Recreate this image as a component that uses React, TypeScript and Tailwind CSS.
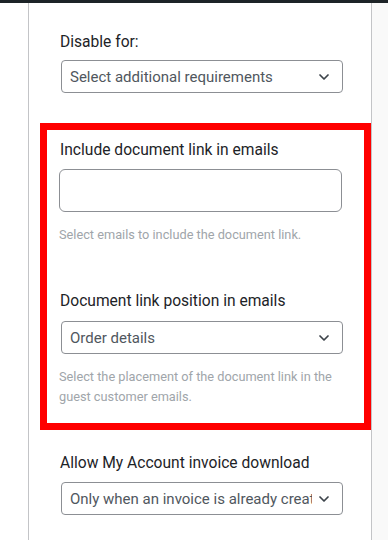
import { ChevronDown } from "lucide-react";

function SelectBox({ value }: { value: string }) {
    return (
        <div className="flex h-[33px] w-[282px] items-center rounded-[4px] border border-[#8c8f94] bg-white pl-[8px] pr-[10px]">
            <span className="flex-1 overflow-hidden whitespace-nowrap text-[15px] leading-[24px] text-[#50575e]">{value}</span>
            <ChevronDown size={16} strokeWidth={2.6} className="ml-[4px] shrink-0 text-[#3c434a]" />
        </div>
    );
}

function Label({ children }: { children: string }) {
    return <div className="text-[15.6px] leading-[24px] text-[#1d2327]">{children}</div>;
}

export default function App() {
    return (
        <div className="h-[540px] w-[388px] overflow-hidden bg-white font-[Roboto,sans-serif]">
            <div className="h-[3px] bg-[#1d2327]" />
            <div className="flex h-[537px]">
                <div className="w-[28px] shrink-0" />
                <div className="w-[344px] shrink-0 border-x border-[#c3c4c7] pt-[27px]">
                    <div className="ml-[31px]">
                        <Label>Disable for:</Label>
                    </div>
                    <div className="ml-[32px] mt-[6px]">
                        <SelectBox value="Select additional requirements" />
                    </div>

                    <div className="ml-[11px] mt-[30px] h-[307px] w-[331px] border-[7px] border-[#ff0000] pl-[12px] pt-[8px]">
                        <div className="ml-[1px]">
                            <Label>Include document link in emails</Label>
                        </div>
                        <div className="mt-[7px] h-[43px] w-[283px] rounded-[6px] border border-[#8c8f94] bg-white" />
                        <div className="mt-[13px] text-[12.75px] leading-[20px] text-[#a0a5aa]">Select emails to include the document link.</div>

                        <div className="ml-[1px] mt-[44px]">
                            <Label>Document link position in emails</Label>
                        </div>
                        <div className="ml-[2px] mt-[8px]">
                            <SelectBox value="Order details" />
                        </div>
                        <div className="mt-[13px] w-[285px] text-[12.75px] leading-[20px] text-[#a0a5aa]">
                            Select the placement of the document link in the guest customer emails.
                        </div>
                    </div>

                    <div className="ml-[31px] mt-[21px]">
                        <Label>Allow My Account invoice download</Label>
                    </div>
                    <div className="ml-[32px] mt-[7px]">
                        <SelectBox value="Only when an invoice is already created" />
                    </div>
                </div>
                <div className="flex-1 bg-[#f9f9f9]" />
            </div>
        </div>
    );
}
